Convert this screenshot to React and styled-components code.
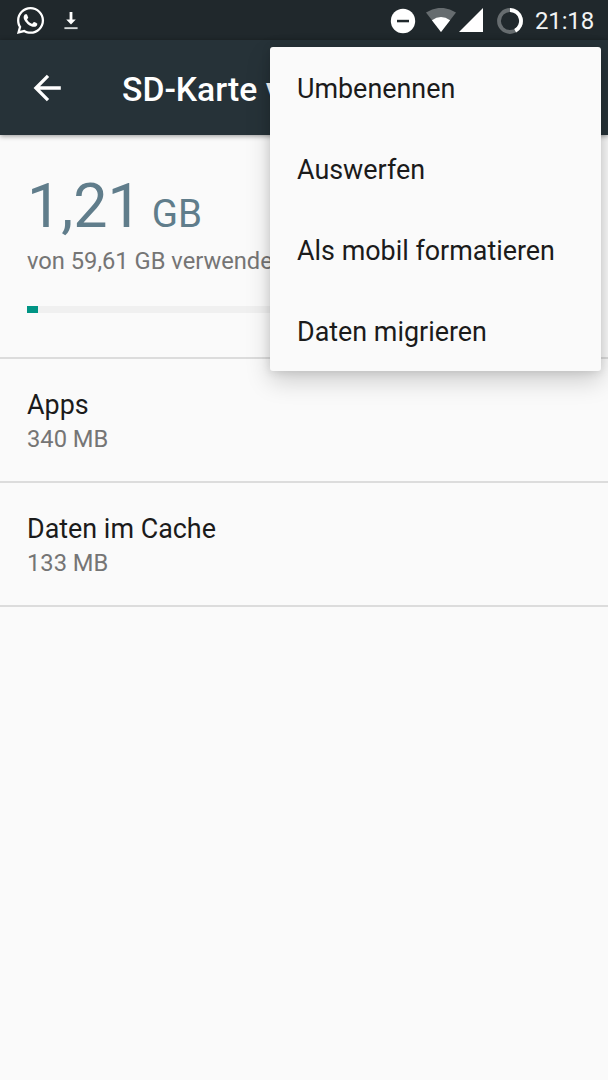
import React from 'react';
import styled, { createGlobalStyle } from 'styled-components';
import { FaWhatsapp } from 'react-icons/fa';

const GlobalStyle = createGlobalStyle`
  * {
    box-sizing: border-box;
  }

  body {
    margin: 0;
    background: #fafafa;
    font-family: Roboto, sans-serif;
  }
`;

const Screen = styled.div`
  position: relative;
  width: 608px;
  height: 1080px;
  overflow: hidden;
  background: #fafafa;
`;

const StatusBar = styled.div`
  display: flex;
  justify-content: space-between;
  height: 40px;
  padding: 1px 14px 0 15px;
  background: #20282c;
  color: #fff;
`;

const StatusGroup = styled.div`
  display: flex;
  align-items: center;
  gap: ${(props) => props.$gap || 0};

  svg {
    display: block;
    flex: none;
  }
`;

const StatusIcon = styled.span`
  margin-left: ${(props) => props.$left || 0};
  margin-top: ${(props) => props.$top || 0};
`;

const Clock = styled.span`
  margin-left: 12px;
  padding-top: 1px;
  font-size: 24px;
  line-height: 38px;
  letter-spacing: -0.15px;
  color: #f1f3f3;
`;

const Toolbar = styled.header`
  display: flex;
  align-items: center;
  height: 95px;
  padding-left: 33px;
  background: #263238;
  color: #fff;
  box-shadow: 0 1px 5px rgba(0, 0, 0, 0.42);
`;

const Title = styled.h1`
  margin: 4px 0 0 61px;
  font-size: 33.7px;
  font-weight: 500;
  line-height: 40px;
  white-space: nowrap;
`;

const Summary = styled.section`
  height: 224px;
  padding: 36px 27px 0;
  border-bottom: 2px solid #dcdcdc;
`;

const Amount = styled.div`
  height: 71px;
  font-size: 61px;
  line-height: 71px;
  color: #607d8b;
`;

const Unit = styled.span`
  margin-left: 10px;
  font-size: 38.5px;
`;

const Caption = styled.div`
  margin-top: 5px;
  font-size: 23.7px;
  line-height: 28px;
  color: #757575;
  white-space: nowrap;
`;

const Track = styled.div`
  height: 7px;
  margin-top: 31px;
  background: #f0f0f0;
`;

const Used = styled.div`
  height: 100%;
  background: #009484;
`;

const Row = styled.div`
  height: 124px;
  padding: 30px 27px 0;
  border-bottom: 2px solid #dcdcdc;
`;

const RowTitle = styled.div`
  font-size: 26.9px;
  line-height: 32px;
  color: #1b1b1b;
`;

const RowValue = styled.div`
  margin-top: 4px;
  font-size: 23.7px;
  line-height: 28px;
  color: #757575;
`;

const Menu = styled.ul`
  position: absolute;
  top: 47px;
  right: 7px;
  width: 331px;
  height: 324px;
  margin: 0;
  padding: 1px 0 0;
  list-style: none;
  background: #fafafa;
  border-radius: 3px;
  box-shadow: 0 10px 24px rgba(0, 0, 0, 0.18), 0 1px 10px rgba(0, 0, 0, 0.12);
`;

const MenuItem = styled.li`
  height: 81px;
  padding-left: 27px;
  padding-top: 1px;
  font-size: 26.9px;
  line-height: 81px;
  color: #1b1b1b;
`;

const DownloadIcon = () => (
  <svg width="14" height="18" viewBox="0 0 14 18">
    <path d="M5.6 0h2.8v7.5h3.4L7 12.6 2.2 7.5h3.4z" fill="#fff" />
    <path d="M0.4 15.2h13.2v1.9H0.4z" fill="#d5d8d9" />
  </svg>
);

const DoNotDisturbIcon = () => (
  <svg width="26" height="26" viewBox="0 0 26 26">
    <circle cx="13" cy="13" r="12.2" fill="#fff" />
    <rect x="7" y="11.8" width="12" height="2.5" fill="#20282c" />
  </svg>
);

const WifiIcon = () => (
  <svg width="30" height="24" viewBox="0 0 30 24">
    <path d="M0 4.6Q15 -4.9 30 4.6L15 24z" fill="#666c6f" />
    <path d="M5.9 12.2Q15 5.8 24.1 12.2L15 24z" fill="#fff" />
  </svg>
);

const SignalIcon = () => (
  <svg width="24" height="24" viewBox="0 0 24 24">
    <path d="M24 0v24H0z" fill="#fff" />
  </svg>
);

const BatteryIcon = () => (
  <svg width="26" height="26" viewBox="0 0 26 26" fill="none" strokeWidth="3.8">
    <circle cx="13" cy="13" r="11" stroke="#666c6f" />
    <path d="M13 2a11 11 0 0 1 5.2 20.7" stroke="#fff" />
  </svg>
);

const BackIcon = () => (
  <svg width="28" height="28" viewBox="0 0 28 28" fill="none" stroke="#fff" strokeWidth="3.3">
    <path d="M15 1.9L2.9 14 15 26.1M3 14h24.8" />
  </svg>
);

const menuItems = ['Umbenennen', 'Auswerfen', 'Als mobil formatieren', 'Daten migrieren'];

const rows = [
  { title: 'Apps', value: '340 MB' },
  { title: 'Daten im Cache', value: '133 MB' },
];

const App = () => {
  const usedPercent = 2.03;

  return (
    <Screen>
      <GlobalStyle />
      <StatusBar>
        <StatusGroup $gap="18px">
          <FaWhatsapp size={31} />
          <DownloadIcon />
        </StatusGroup>
        <StatusGroup>
          <StatusIcon>
            <DoNotDisturbIcon />
          </StatusIcon>
          <StatusIcon $left="10px" $top="-1px">
            <WifiIcon />
          </StatusIcon>
          <StatusIcon $left="3px" $top="-1px">
            <SignalIcon />
          </StatusIcon>
          <StatusIcon $left="14px">
            <BatteryIcon />
          </StatusIcon>
          <Clock>21:18</Clock>
        </StatusGroup>
      </StatusBar>
      <Toolbar>
        <BackIcon />
        <Title>SD-Karte von</Title>
      </Toolbar>
      <Summary>
        <Amount>
          1,21<Unit>GB</Unit>
        </Amount>
        <Caption>von 59,61 GB verwendet</Caption>
        <Track>
          <Used style={{ width: `${usedPercent}%` }} />
        </Track>
      </Summary>
      {rows.map((row) => (
        <Row key={row.title}>
          <RowTitle>{row.title}</RowTitle>
          <RowValue>{row.value}</RowValue>
        </Row>
      ))}
      <Menu>
        {menuItems.map((item) => (
          <MenuItem key={item}>{item}</MenuItem>
        ))}
      </Menu>
    </Screen>
  );
};

export default App;
